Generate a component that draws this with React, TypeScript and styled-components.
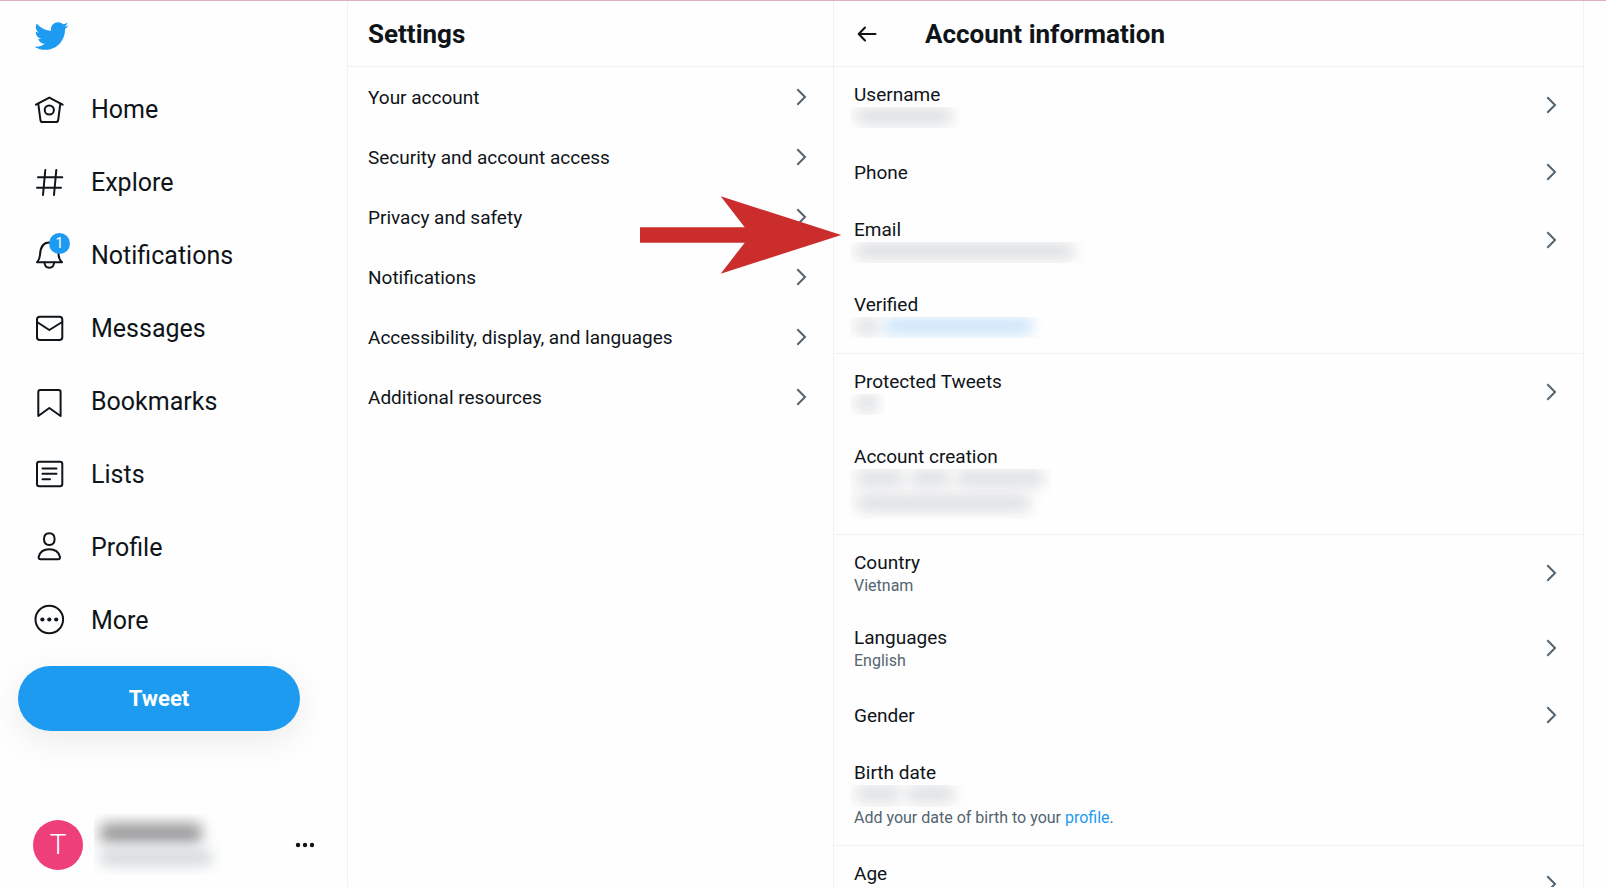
import React from "react";
import styled, { createGlobalStyle } from "styled-components";

const ink = "#0f1419";
const muted = "#536471";
const line = "#eff1f2";
const blue = "#1d9bf0";

const GlobalStyle = createGlobalStyle`
  * { box-sizing: border-box; }
  body {
    margin: 0;
    background: #fefefe;
    color: ${ink};
    font-family: Roboto, "Liberation Sans", sans-serif;
    font-size: 19px;
    line-height: 24px;
  }
  a { color: inherit; text-decoration: none; }
  button { font: inherit; color: inherit; border: 0; background: none; padding: 0; cursor: pointer; }
  h1, h2, p, ul { margin: 0; padding: 0; }
  ul { list-style: none; }
  svg { display: block; flex: none; }
`;

const Page = styled.div`
  display: grid;
  grid-template-columns: 348px minmax(0, 486fr) minmax(0, 750fr) 22px;
  grid-template-rows: minmax(0, 1fr);
  height: 100vh;
  overflow: hidden;
  border-top: 1px solid #dfb0ba;
`;

const Sidebar = styled.header`
  display: flex;
  flex-direction: column;
  border-right: 1px solid ${line};
`;

const Logo = styled.a`
  display: flex;
  align-items: center;
  height: 72px;
  padding: 0 0 2px 33px;
  color: ${blue};
`;

const NavLink = styled.a`
  display: flex;
  align-items: center;
  gap: 25px;
  height: 73px;
  padding-left: 33px;
  font-size: 25px;
  line-height: 32px;
`;

const NavLabel = styled.span`
  padding-top: 1px;
`;

const NavIcon = styled.span`
  position: relative;
`;

const Badge = styled.span`
  position: absolute;
  top: -6px;
  right: -4px;
  width: 21px;
  height: 21px;
  border-radius: 50%;
  background: ${blue};
  color: #fff;
  font-size: 14px;
  line-height: 20px;
  text-align: center;
`;

const TweetButton = styled.button`
  flex: none;
  height: 65px;
  margin: 9px 47px 0 18px;
  border-radius: 33px;
  background: ${blue};
  color: #fff;
  font-size: 22px;
  font-weight: 700;
  box-shadow: 0 10px 35px rgba(0, 0, 0, 0.08);
`;

const UserMenu = styled.button`
  display: flex;
  align-items: center;
  gap: 11px;
  margin: auto 32px 12px 33px;
  text-align: left;
`;

const Avatar = styled.span`
  display: grid;
  place-items: center;
  width: 50px;
  height: 50px;
  border-radius: 50%;
  background: #ee3f7a;
  color: #fff;
  font-size: 28px;
  font-weight: 300;
`;

const Names = styled.span`
  display: flex;
  flex-direction: column;
  gap: 7px;
  width: 128px;
  height: 61px;
  padding: 9px 6px;
  margin-right: auto;
  overflow: hidden;
`;

const Column = styled.section`
  border-right: 1px solid ${line};
`;

const ColumnHeader = styled.div`
  display: flex;
  align-items: center;
  gap: 47px;
  height: 66px;
  padding: 0 20px;
  border-bottom: 1px solid ${line};
`;

const Title = styled.h1`
  font-size: 26px;
  line-height: 30px;
  font-weight: 700;
`;

const BackButton = styled.button`
  margin-left: 3px;
`;

const SettingsLink = styled.a`
  display: flex;
  align-items: center;
  justify-content: space-between;
  height: 60px;
  padding: 0 26px 0 20px;
`;

const Group = styled.div`
  padding-bottom: 1px;
  border-bottom: 1px solid ${line};
`;

const InfoRow = styled.div`
  position: relative;
  display: flex;
  align-items: center;
  justify-content: space-between;
  padding: 14px 26px 14px 20px;
`;

const SingleRow = styled(InfoRow)`
  height: 60px;
`;

const Text = styled.div`
  padding-top: 2px;
`;

const Detail = styled.p`
  color: ${muted};
  font-size: 16px;
  line-height: 21px;
`;

const Note = styled(Detail)`
  padding-bottom: 2px;
`;

const ProfileLink = styled.a`
  color: ${blue};
`;

const Redacted = styled.div<{ $width: number; $height?: number }>`
  display: flex;
  flex-direction: column;
  gap: 9px;
  width: ${(p) => p.$width}px;
  height: ${(p) => p.$height ?? 21}px;
  margin-left: -4px;
  padding: 1px 6px;
  overflow: hidden;
`;

const SmudgeRow = styled.span`
  display: flex;
  gap: 6px;
`;

const Smudge = styled.span<{ $width: number; $color?: string; $height?: number }>`
  width: ${(p) => p.$width}px;
  height: ${(p) => p.$height ?? 16}px;
  border-radius: 6px;
  background: ${(p) => p.$color ?? "#dcdee1"};
  filter: blur(7px);
`;

const Pointer = styled.svg`
  position: absolute;
  left: -194px;
  top: -6px;
`;

const Stroke = ({ children }: { children: React.ReactNode }) => (
  <svg width="33" height="33" viewBox="0 0 33 33" fill="none" stroke={ink} strokeWidth="2" strokeLinecap="round" strokeLinejoin="round" overflow="visible" aria-hidden="true">
    {children}
  </svg>
);

const Chevron = () => (
  <svg width="11" height="18" viewBox="0 0 11 18" fill="none" stroke={muted} strokeWidth="2" aria-hidden="true">
    <path d="M1.3 1.3 9 9l-7.7 7.7" />
  </svg>
);

const Bird = () => (
  <svg width="36" height="36" viewBox="0 0 24 24" fill="currentColor" aria-label="Twitter">
    <path d="M23.643 4.937c-.835.37-1.732.62-2.675.733.962-.576 1.7-1.49 2.048-2.578-.9.534-1.897.922-2.958 1.13-.85-.904-2.06-1.47-3.4-1.47-2.572 0-4.658 2.086-4.658 4.66 0 .364.042.718.12 1.06-3.873-.195-7.304-2.05-9.602-4.868-.4.69-.63 1.49-.63 2.342 0 1.616.823 3.043 2.072 3.878-.764-.025-1.482-.234-2.11-.583v.06c0 2.257 1.605 4.14 3.737 4.568-.392.106-.803.162-1.227.162-.3 0-.593-.028-.877-.082.593 1.85 2.313 3.198 4.352 3.234-1.595 1.25-3.604 1.995-5.786 1.995-.376 0-.747-.022-1.112-.065 2.062 1.323 4.51 2.093 7.14 2.093 8.57 0 13.255-7.098 13.255-13.254 0-.2-.005-.402-.014-.602.91-.658 1.7-1.477 2.323-2.41z" />
  </svg>
);

const navItems = [
  {
    label: "Home",
    icon: (
      <>
        <path d="M3 11.7 16.3 4.6l13.3 7.1" />
        <path d="M5.3 10.8 7.4 26.8q.3 2.3 2.3 2.3h13.2q2 0 2.3-2.3l2.1-16" />
        <circle cx="16.3" cy="17" r="4.6" />
      </>
    ),
  },
  { label: "Explore", icon: <path d="M12.3 4 10 29M23.3 4 21 29M5 11.2h24.3M4 21.8h24" /> },
  {
    label: "Notifications",
    badge: "1",
    icon: (
      <>
        <path d="M4 23.3c2-2.3 2.9-4.6 3-7.3.3-7.5 3-12.5 9.3-12.5S25.3 8.5 25.6 16c.1 2.7 1 5 3.4 7.3z" />
        <path d="M11.5 23.5c.3 3.7 2.2 5.3 4.8 5.3s4.5-1.6 4.8-5.3" />
      </>
    ),
  },
  {
    label: "Messages",
    icon: (
      <>
        <rect x="4" y="4.7" width="25.3" height="23.3" rx="2.8" />
        <path d="m4 10 12.3 8 12.9-8" />
      </>
    ),
  },
  { label: "Bookmarks", icon: <path d="M5.3 31V7q0-2 2-2h18.3q2 0 2 2v24l-11.3-8z" /> },
  {
    label: "Lists",
    icon: (
      <>
        <rect x="4" y="3.7" width="25.3" height="24.6" rx="2.3" />
        <path d="M9.5 10.5h14M9.5 15.7h14M9.5 21.2h7.5" />
      </>
    ),
  },
  {
    label: "Profile",
    icon: (
      <>
        <path d="M16.3 2.3c3.5 0 5.3 2.3 5.3 6 0 4-2 5.7-5.3 5.7S11 12.3 11 8.3c0-3.7 1.8-6 5.3-6z" />
        <path d="M16.3 18.2c5.7 0 9.5 3 10.6 7.6.3 1.5-.4 2.4-1.7 2.4H7.4c-1.3 0-2-.9-1.7-2.4 1.1-4.6 4.9-7.6 10.6-7.6z" />
      </>
    ),
  },
  {
    label: "More",
    icon: (
      <>
        <circle cx="16.3" cy="15.5" r="13.8" />
        <g fill={ink} stroke="none">
          <circle cx="9.4" cy="15.5" r="2.1" />
          <circle cx="16.3" cy="15.5" r="2.1" />
          <circle cx="23.2" cy="15.5" r="2.1" />
        </g>
      </>
    ),
  },
];

const settings = [
  "Your account",
  "Security and account access",
  "Privacy and safety",
  "Notifications",
  "Accessibility, display, and languages",
  "Additional resources",
];

export default function App() {
  return (
    <>
      <GlobalStyle />
      <Page>
        <Sidebar>
          <Logo href="#home">
            <Bird />
          </Logo>
          <nav>
            {navItems.map((item) => (
              <NavLink key={item.label} href="#">
                <NavIcon>
                  <Stroke>{item.icon}</Stroke>
                  {item.badge && <Badge>{item.badge}</Badge>}
                </NavIcon>
                <NavLabel>{item.label}</NavLabel>
              </NavLink>
            ))}
          </nav>
          <TweetButton type="button">Tweet</TweetButton>
          <UserMenu type="button" aria-label="Account menu">
            <Avatar>T</Avatar>
            <Names>
              <Smudge $width={102} $height={20} $color="#9a9a9c" />
              <Smudge $width={112} $height={15} $color="#d0d6da" />
            </Names>
            <svg width="20" height="6" viewBox="0 0 20 6" fill={ink} aria-hidden="true">
              <circle cx="3" cy="3" r="2.2" />
              <circle cx="10" cy="3" r="2.2" />
              <circle cx="17" cy="3" r="2.2" />
            </svg>
          </UserMenu>
        </Sidebar>

        <Column>
          <ColumnHeader>
            <Title>Settings</Title>
          </ColumnHeader>
          {settings.map((label) => (
            <SettingsLink key={label} href="#">
              <Text>{label}</Text>
              <Chevron />
            </SettingsLink>
          ))}
        </Column>

        <Column>
          <ColumnHeader>
            <BackButton type="button" aria-label="Back">
              <svg width="21" height="18" viewBox="0 0 21 18" fill="none" stroke={ink} strokeWidth="2" strokeLinecap="round" strokeLinejoin="round">
                <path d="M18.5 9H2M8 2.5 1.7 9 8 15.5" />
              </svg>
            </BackButton>
            <Title as="h2">Account information</Title>
          </ColumnHeader>
          <Group>
            <InfoRow>
              <Text>
                Username
                <Redacted $width={111}>
                  <Smudge $width={96} />
                </Redacted>
              </Text>
              <Chevron />
            </InfoRow>
            <SingleRow>
              <Text>Phone</Text>
              <Chevron />
            </SingleRow>
            <InfoRow>
              <Text>
                Email
                <Redacted $width={236}>
                  <Smudge $width={218} />
                </Redacted>
              </Text>
              <Chevron />
              <Pointer width="202" height="78" viewBox="0 0 202 78" fill="#cb2d2d" aria-hidden="true">
                <path d="M0 31.3h104.7L80.7.3 201.3 39 80.7 77.7l24-31H0z" />
              </Pointer>
            </InfoRow>
            <InfoRow>
              <Text>
                Verified
                <Redacted $width={192}>
                  <SmudgeRow>
                    <Smudge $width={22} />
                    <Smudge $width={148} $color="#c8e3fa" />
                  </SmudgeRow>
                </Redacted>
              </Text>
            </InfoRow>
          </Group>
          <Group>
            <InfoRow>
              <Text>
                Protected Tweets
                <Redacted $width={35}>
                  <Smudge $width={22} />
                </Redacted>
              </Text>
              <Chevron />
            </InfoRow>
            <InfoRow>
              <Text>
                Account creation
                <Redacted $width={202} $height={50}>
                  <SmudgeRow>
                    <Smudge $width={48} />
                    <Smudge $width={40} />
                    <Smudge $width={88} />
                  </SmudgeRow>
                  <Smudge $width={174} />
                </Redacted>
              </Text>
            </InfoRow>
          </Group>
          <Group>
            <InfoRow>
              <Text>
                Country
                <Detail>Vietnam</Detail>
              </Text>
              <Chevron />
            </InfoRow>
            <InfoRow>
              <Text>
                Languages
                <Detail>English</Detail>
              </Text>
              <Chevron />
            </InfoRow>
            <SingleRow>
              <Text>Gender</Text>
              <Chevron />
            </SingleRow>
            <InfoRow>
              <Text>
                Birth date
                <Redacted $width={117} $height={22}>
                  <SmudgeRow>
                    <Smudge $width={44} />
                    <Smudge $width={48} />
                  </SmudgeRow>
                </Redacted>
                <Note>
                  Add your date of birth to your <ProfileLink href="#profile">profile</ProfileLink>.
                </Note>
              </Text>
            </InfoRow>
          </Group>
          <Group>
            <InfoRow>
              <Text>
                Age
                <Detail>&nbsp;</Detail>
              </Text>
              <Chevron />
            </InfoRow>
          </Group>
        </Column>
      </Page>
    </>
  );
}
